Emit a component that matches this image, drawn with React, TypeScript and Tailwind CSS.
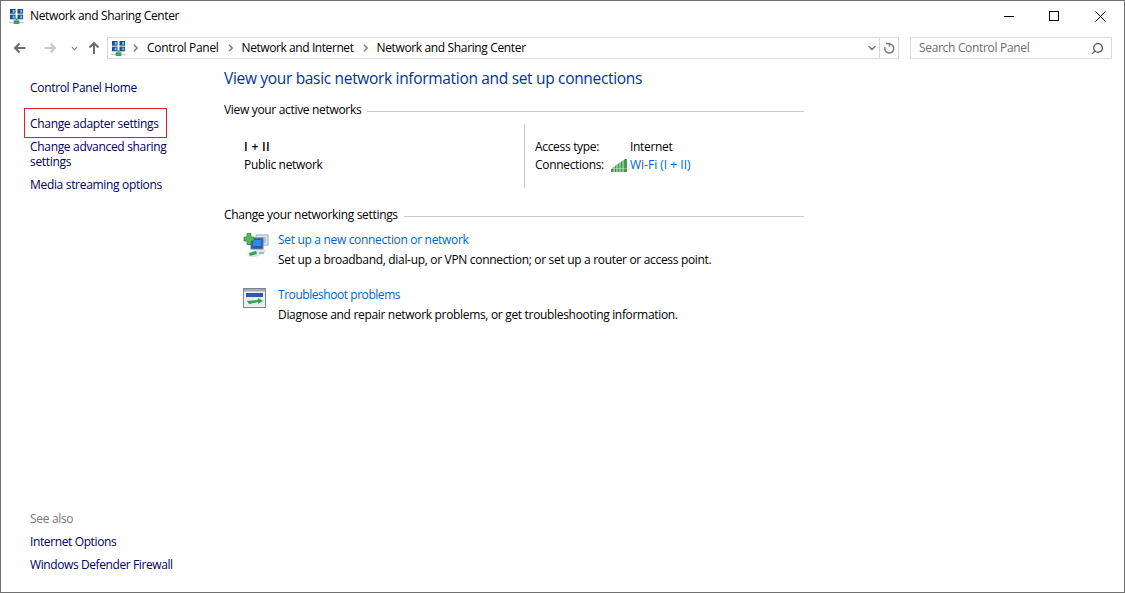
import { ChevronDown, Search } from 'lucide-react';

const font = "[font-family:'Open_Sans','Noto_Sans',sans-serif]";

function NetworkIcon() {
  return (
    <svg width="15" height="15" viewBox="0 0 16 16" className="shrink-0">
      <rect x="1" y="0" width="6" height="5" fill="#1e4f8c" />
      <rect x="4" y="1" width="2" height="3" fill="#7cc0f5" />
      <rect x="9" y="0" width="6" height="5" fill="#1e4f8c" />
      <rect x="12" y="1" width="2" height="3" fill="#7cc0f5" />
      <rect x="1" y="6" width="6" height="5" fill="#1e4f8c" />
      <rect x="4" y="7" width="2" height="3" fill="#7cc0f5" />
      <rect x="9" y="6" width="6" height="5" fill="#1e4f8c" />
      <rect x="12" y="7" width="2" height="3" fill="#7cc0f5" />
      <rect x="0" y="14" width="16" height="1" fill="#b9c4b9" />
      <rect x="5" y="12" width="6" height="4" fill="#2fa36b" />
      <rect x="7" y="10" width="2" height="2" fill="#2fa36b" />
    </svg>
  );
}

function NavArrow({ dir, color }: { dir: 'left' | 'right' | 'up'; color: string }) {
  const d = {
    left: 'M12.5 7H2M6.5 2.5 2 7l4.5 4.5',
    right: 'M1.5 7H12M7.5 2.5 12 7l-4.5 4.5',
    up: 'M7 13V2M2.5 6.5 7 2l4.5 4.5',
  }[dir];
  return (
    <svg width="14" height="14" viewBox="0 0 14 14" fill="none" stroke={color} strokeWidth="2" className="shrink-0">
      <path d={d} />
    </svg>
  );
}

function Crumb({ first }: { first?: boolean }) {
  return (
    <svg width="6" height="8" viewBox="0 0 6 8" fill="none" stroke="#7d7d7d" strokeWidth="1.5" className={first ? 'shrink-0 ml-[7px] mr-[8px]' : 'shrink-0 ml-[9px] mr-[8px]'}>
      <path d="M1 .8 4.2 4 1 7.2" />
    </svg>
  );
}

function SetupIcon() {
  return (
    <svg width="26" height="26" viewBox="0 0 26 26" className="shrink-0">
      <rect x="13" y="3" width="12" height="10" fill="#e4e9ef" stroke="#9aa5b3" />
      <rect x="15" y="5" width="8" height="6" fill="#9cc8ef" />
      <rect x="8" y="6" width="12" height="11" fill="#2a5aa8" stroke="#6b7a8f" />
      <rect x="10" y="8" width="8" height="6" fill="#2f8be8" />
      <path d="M1 5h3V1.500h4V5h3v4H8v3.500H4V9H1z" fill="#56b85c" stroke="#2b7f34" strokeWidth=".7" />
      <path d="M4 21l9-3h10l-1 3-9 4H6z" fill="#dfe3e7" />
      <path d="M6 21l7-2 1 3-7 2z" fill="#2fa34e" />
      <path d="M16 20h5v2h-5z" fill="#a9b1ba" />
    </svg>
  );
}

function TroubleshootIcon() {
  return (
    <svg width="24" height="22" viewBox="0 0 24 22" className="shrink-0">
      <rect x=".5" y=".5" width="22" height="19" fill="#eef0f2" stroke="#7b838c" />
      <rect x="1" y="1" width="21" height="2.500" fill="#a4abb3" />
      <rect x="3" y="5" width="17" height="4" fill="#2b5aa8" />
      <rect x="3" y="9" width="17" height="8" fill="#e6eaed" />
      <path d="M4 13l11-1v-2l5 3-5 3v-2l-9 2z" fill="#2fa35a" />
    </svg>
  );
}

function SignalIcon() {
  return (
    <svg width="16" height="13" viewBox="0 0 16 13" className="shrink-0">
      <path d="M0 13V10l14-10h2v13z" fill="#3f9a4a" />
      <path d="M3 13V7M6 13V5M9 13V3M12 13V1" stroke="#cfe8d2" strokeWidth="1" />
      <path d="M0 9.500h16" stroke="#ffffff" strokeOpacity=".35" strokeWidth="1" />
    </svg>
  );
}

function SectionTitle({ text }: { text: string }) {
  return (
    <div className="flex items-center gap-[6px] h-4 w-[580px]">
      <span className="text-black whitespace-nowrap -mt-[2px]">{text}</span>
      <div className="flex-1 h-px bg-[#c8c8c8]" />
    </div>
  );
}

export default function App() {
  return (
    <div className={`${font} text-[12px] leading-4 tracking-[-0.32px] w-[1125px] h-[593px] bg-white border border-[#707070] flex flex-col overflow-hidden text-black`}>
      {/* Title bar */}
      <div className="h-[30px] flex items-center shrink-0 pl-[8px]">
        <NetworkIcon />
        <span className="ml-[6px] tracking-[-0.36px]">Network and Sharing Center</span>
        <div className="ml-auto flex items-center">
          <div className="w-[10px] h-px bg-black mr-[35px]" />
          <div className="w-[10px] h-[10px] border border-black mr-[36px]" />
          <svg width="11" height="11" viewBox="0 0 11 11" stroke="#000" className="mr-[18px]">
            <path d="M.5.5l10 10M10.5.5l-10 10" />
          </svg>
        </div>
      </div>

      {/* Address bar */}
      <div className="h-[22px] mt-[6px] flex items-center shrink-0">
        <div className="ml-[12px] w-[94px] flex items-center">
          <NavArrow dir="left" color="#6d6d6d" />
          <div className="ml-[16px]"><NavArrow dir="right" color="#c8c8c8" /></div>
          <ChevronDown size={9} strokeWidth={3} color="#808080" className="ml-[13px]" />
          <div className="ml-[8px]"><NavArrow dir="up" color="#6d6d6d" /></div>
        </div>
        <div className="w-[792px] h-[22px] border border-[#d9d9d9] flex items-center pl-[3px]">
          <NetworkIcon />
          <Crumb first />
          <span>Control Panel</span>
          <Crumb />
          <span className="tracking-[-0.42px]">Network and Internet</span>
          <Crumb />
          <span className="tracking-[-0.36px]">Network and Sharing Center</span>
          <ChevronDown size={12} strokeWidth={2.500} color="#6d6d6d" className="ml-auto mr-[1px]" />
          <div className="h-full w-px bg-[#d9d9d9]" />
          <svg width="12" height="13" viewBox="0 0 12 13" fill="none" stroke="#7a7a7a" strokeWidth="1.500" className="mx-[3px]">
            <path d="M3 1.500h3.500v3M6 2a4.500 4.500 0 1 1-4 3" />
          </svg>
        </div>
        <div className="ml-[11px] w-[202px] h-[22px] border border-[#d9d9d9] flex items-center pl-[8px] pr-[7px] text-[#6d6d6d]">
          <span>Search Control Panel</span>
          <Search size={13} strokeWidth={2.500} color="#5a5a5a" className="ml-auto -scale-x-100" />
        </div>
      </div>

      <div className="flex flex-1 min-h-0">
        {/* Sidebar */}
        <aside className="w-[223px] shrink-0 flex flex-col pl-[29px] text-[#00005e]">
          <div className="mt-[21px]">Control Panel Home</div>
          <div className="mt-[12px] -ml-[6px] w-[143px] h-[30px] border border-[#ed1c24] flex items-center pl-[5px] pt-[1px]">Change adapter settings</div>
          <div className="mt-[1px] leading-[15px] w-[150px]">Change advanced sharing settings</div>
          <div className="mt-[8px]">Media streaming options</div>
          <div className="mt-auto text-[#767676]">See also</div>
          <div className="mt-[7px] tracking-[-0.38px]">Internet Options</div>
          <div className="mt-[7px] mb-[19px] tracking-[-0.4px]">Windows Defender Firewall</div>
        </aside>

        {/* Main content */}
        <main className="flex-1 flex flex-col">
          <h1 className="mt-[8px] text-[15.500px] leading-[22px] text-[#003399]">View your basic network information and set up connections</h1>
          <div className="mt-[14px]"><SectionTitle text="View your active networks" /></div>
          <div className="mt-[5px] flex h-[64px] w-[580px]">
            <div className="w-[300px] pl-[20px] pt-[15px]">
              <div className="font-semibold tracking-[0.3px]">I + II</div>
              <div className="mt-[2px]">Public network</div>
            </div>
            <div className="w-px h-full bg-[#c8c8c8]" />
            <div className="pl-[10px] pt-[15px]">
              <div className="flex">
                <span className="w-[95px]">Access type:</span>
                <span>Internet</span>
              </div>
              <div className="flex items-center mt-[2px]">
                <span className="w-[76px]">Connections:</span>
                <SignalIcon />
                <span className="ml-[3px] text-[#0066cc] tracking-normal">Wi-Fi (I + II)</span>
              </div>
            </div>
          </div>
          <div className="mt-[20px]"><SectionTitle text="Change your networking settings" /></div>
          <div className="mt-[8px] ml-[19px] flex">
            <SetupIcon />
            <div className="ml-[9px]">
              <div className="text-[#0066cc]">Set up a new connection or network</div>
              <div className="mt-[4px]">Set up a broadband, dial-up, or VPN connection; or set up a router or access point.</div>
            </div>
          </div>
          <div className="mt-[19px] ml-[19px] flex">
            <div className="w-[26px] pt-[1px]"><TroubleshootIcon /></div>
            <div className="ml-[9px]">
              <div className="text-[#0066cc] tracking-[-0.45px]">Troubleshoot problems</div>
              <div className="mt-[4px]">Diagnose and repair network problems, or get troubleshooting information.</div>
            </div>
          </div>
        </main>
      </div>
    </div>
  );
}
